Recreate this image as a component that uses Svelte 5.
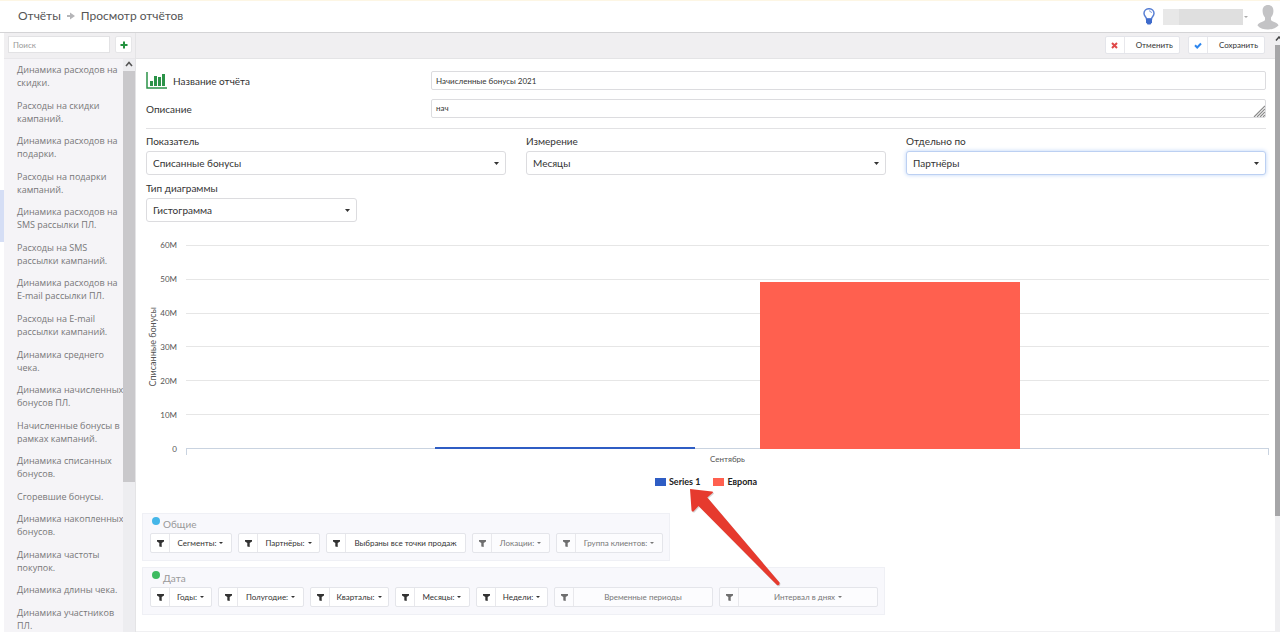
<script>
  const reports = [
    'Динамика расходов на скидки.',
    'Расходы на скидки кампаний.',
    'Динамика расходов на подарки.',
    'Расходы на подарки кампаний.',
    'Динамика расходов на SMS рассылки ПЛ.',
    'Расходы на SMS рассылки кампаний.',
    'Динамика расходов на E-mail рассылки ПЛ.',
    'Расходы на E-mail рассылки кампаний.',
    'Динамика среднего чека.',
    'Динамика начисленных бонусов ПЛ.',
    'Начисленные бонусы в рамках кампаний.',
    'Динамика списанных бонусов.',
    'Сгоревшие бонусы.',
    'Динамика накопленных бонусов.',
    'Динамика частоты покупок.',
    'Динамика длины чека.',
    'Динамика участников ПЛ.',
  ];

  const filterGroups = [
    {
      title: 'Общие',
      color: '#45b6e8',
      filters: [
        { label: 'Сегменты:', width: 82, caret: true },
        { label: 'Партнёры:', width: 82, caret: true },
        { label: 'Выбраны все точки продаж', width: 140 },
        { label: 'Локации:', width: 78, caret: true, muted: true },
        { label: 'Группа клиентов:', width: 107, caret: true, muted: true },
      ],
    },
    {
      title: 'Дата',
      color: '#3dbb61',
      filters: [
        { label: 'Годы:', width: 62, caret: true },
        { label: 'Полугодие:', width: 86, caret: true },
        { label: 'Кварталы:', width: 79, caret: true },
        { label: 'Месяцы:', width: 75, caret: true },
        { label: 'Недели:', width: 72, caret: true },
        { label: 'Временные периоды', width: 159, muted: true },
        { label: 'Интервал в днях', width: 159, caret: true, muted: true },
      ],
    },
  ];

  const ticks = ['60M', '50M', '40M', '30M', '20M', '10M', '0'];
  const maxValue = 60;
  const series = [
    { name: 'Series 1', value: 0.6, color: '#2f5dc4' },
    { name: 'Европа', value: 49, color: '#ff604f' },
  ];

  let search = '';
  let name = 'Начисленные бонусы 2021';
  let description = 'нач';
  let metric = 'Списанные бонусы';
  let dimension = 'Месяцы';
  let splitBy = 'Партнёры';
  let chartType = 'Гистограмма';
</script>

<div class="page">
  <header class="header">
    <nav class="breadcrumbs">
      <a href="#reports">Отчёты</a>
      <svg width="8" height="8" viewBox="0 0 8 8"><path d="M0 3h3V0.500L8 4 3 7.500V5H0z" fill="#b5b5b8" /></svg>
      <span>Просмотр отчётов</span>
    </nav>
    <div class="user">
      <svg class="bulb" width="12" height="17" viewBox="0 0 12 17">
        <path d="M3.500 11C3.500 9 1 8.200 1 5.300a5 4.600 0 0 1 10 0C11 8.200 8.500 9 8.500 11z" fill="#fff" stroke="#5a80d4" stroke-width="1.500" />
        <path d="M6 2.800q2.300.1 2.500 2.200" fill="none" stroke="#7e9be0" stroke-width="1" />
        <path d="M3 10.500h6v3.700L7.500 16.500h-3L3 14.200z" fill="#3f6bcb" />
      </svg>
      <span class="user-name"></span>
      <i class="caret"></i>
      <svg class="avatar" width="22" height="26" viewBox="0 0 22 26">
        <path d="M11 1c3.700 0 5.600 2.500 5.400 6.200-.1 3-1.200 4.600-2.400 6.300v2.600c1.200 2 6.500 2.200 7.500 5.400C18.500 24.500 15 25.500 11 25.500S3 24.500.5 21.500C1.500 18.300 6.800 18.100 8 16.100v-2.600C6.800 11.800 5.700 10.200 5.600 7.200 5.400 3.500 7.300 1 11 1z" fill="#c3c3c5" />
      </svg>
    </div>
  </header>

  <div class="body">
    <div class="rail"></div>

    <aside class="sidebar">
      <div class="search">
        <input type="text" placeholder="Поиск" aria-label="Поиск" bind:value={search} />
        <button type="button" class="add" aria-label="Добавить">
          <svg width="8" height="8" viewBox="0 0 8 8"><path d="M3 0.500h2V3h2.500v2H5v2.500H3V5H0.500V3H3z" fill="#23913f" /></svg>
        </button>
      </div>
      <div class="list-wrap">
        <ul class="reports">
          {#each reports as report}
            <li><a href="#report">{report}</a></li>
          {/each}
        </ul>
        <div class="scroll">
          <svg width="8" height="6" viewBox="0 0 8 6"><path d="M1 5l3-3.500L7 5" fill="none" stroke="#555" stroke-width="1.600" /></svg>
          <div class="thumb"></div>
        </div>
      </div>
    </aside>

    <main class="main">
      <div class="toolbar">
        <button type="button" class="split">
          <span class="icon"><svg width="7" height="7" viewBox="0 0 7 7"><path d="M1 1l5 5M6 1L1 6" stroke="#e04848" stroke-width="2" /></svg></span>
          <span class="text">Отменить</span>
        </button>
        <button type="button" class="split">
          <span class="icon"><svg width="8" height="7" viewBox="0 0 8 7"><path d="M1 3.300l2.200 2.200L7 1.500" fill="none" stroke="#2d86ee" stroke-width="2" /></svg></span>
          <span class="text">Сохранить</span>
        </button>
      </div>

      <div class="content">
        <div class="row">
          <label for="name">
            <svg width="21" height="17" viewBox="0 0 21 17">
              <path d="M1 0v16h20" fill="none" stroke="#2b9348" stroke-width="1.500" />
              <path d="M4 9h3v5H4zM8 4h3v10H8zM12 5h3v9h-3zM16 2h3v12h-3z" fill="#2b9348" />
            </svg>
            Название отчёта
          </label>
          <input id="name" type="text" bind:value={name} />
        </div>
        <div class="row">
          <label for="description">Описание</label>
          <div class="area">
            <textarea id="description" rows="1" bind:value={description}></textarea>
            <svg width="12" height="12" viewBox="0 0 12 12"><path d="M1 12L12 1M4 12l8-8M7 12l5-5M10 12l2-2" stroke="#8a8a8a" stroke-width="1.200" /></svg>
          </div>
        </div>

        <div class="params">
          <div class="field">
            <label for="metric">Показатель</label>
            <select id="metric" bind:value={metric}><option>Списанные бонусы</option></select>
          </div>
          <div class="field">
            <label for="dimension">Измерение</label>
            <select id="dimension" bind:value={dimension}><option>Месяцы</option></select>
          </div>
          <div class="field">
            <label for="split">Отдельно по</label>
            <select id="split" class="active" bind:value={splitBy}><option>Партнёры</option></select>
          </div>
          <div class="field narrow">
            <label for="type">Тип диаграммы</label>
            <select id="type" bind:value={chartType}><option>Гистограмма</option></select>
          </div>
        </div>

        <div class="chart">
          <div class="axis-title">Списанные бонусы</div>
          <div class="ticks">
            {#each ticks as tick}
              <span>{tick}</span>
            {/each}
          </div>
          <div class="plot">
            <div class="grid">
              {#each ticks.slice(1) as tick}
                <div></div>
              {/each}
            </div>
            <div class="bars">
              {#each series as item}
                <div class="bar" style="height: {(item.value / maxValue) * 100}%; background: {item.color}"></div>
              {/each}
            </div>
          </div>
          <div class="category">Сентябрь</div>
        </div>

        <div class="legend">
          {#each series as item, i}
            <span class="legend-item">
              <i style="background: {item.color}"></i>{item.name}
              {#if i === 0}
                <svg class="arrow" width="94" height="100" viewBox="0 0 94 100">
                  <path d="M1 1L23 3.500Q25 4 23 5.500L18.300 9.500 90.500 94.500Q90.500 98 87.500 97L9.500 18 4.500 23.500Q2.500 24 2 22z" fill="#aaa" opacity="0.500" />
                  <path d="M0 0L22 2.500Q24 3 22 4.500L17.300 8.500 89.500 93.500Q90 97 87 96L8.500 17 3.500 22.500Q1.500 23 1.500 21z" fill="#e63a2e" />
                </svg>
              {/if}
            </span>
          {/each}
        </div>

        {#each filterGroups as group}
          <section class="group">
            <h3><i style="background: {group.color}"></i>{group.title}</h3>
            <div class="filters">
              {#each group.filters as filter}
                <button type="button" class="split" class:muted={filter.muted} style="width: {filter.width}px">
                  <span class="icon"><svg width="7" height="7" viewBox="0 0 7 7"><path d="M0 0h7v1.500L4.700 3V7L2.300 6.500V3L0 1.500z" fill="#333" /></svg></span>
                  <span class="text">{filter.label}{#if filter.caret}<i class="caret"></i>{/if}</span>
                </button>
              {/each}
            </div>
          </section>
        {/each}
      </div>
    </main>

    <div class="page-scroll">
      <svg width="5" height="5" viewBox="0 0 5 5"><path d="M1 4.500L4 1l3 3.500" fill="none" stroke="#444" stroke-width="1.500" /></svg>
      <div class="thumb"></div>
    </div>
  </div>
</div>

<style>
  .page {
    display: flex;
    flex-direction: column;
    height: 100vh;
    overflow: hidden;
    background: #fff;
    color: #333;
    font-family: Lato, 'Open Sans', sans-serif;
    font-size: 10px;
  }

  .page * {
    box-sizing: border-box;
  }

  svg {
    display: block;
    flex: none;
  }

  a {
    color: inherit;
    text-decoration: none;
  }

  button,
  input,
  select,
  textarea {
    margin: 0;
    font-family: inherit;
    color: inherit;
  }

  .header {
    display: flex;
    flex: none;
    align-items: center;
    justify-content: space-between;
    height: 33px;
    padding: 0 1px 0 18px;
    border-top: 1px solid #fdf6e4;
    border-bottom: 1px solid #d4d4d6;
  }

  .breadcrumbs {
    display: flex;
    align-items: center;
    gap: 6px;
    padding-bottom: 2px;
    font-size: 12px;
    color: #555;
  }

  .user {
    display: flex;
    align-items: center;
  }

  .user-name {
    width: 80px;
    height: 16px;
    margin-left: 8px;
    background: linear-gradient(90deg, #e8e8e8 16px, #dfdfdf 16px);
  }

  .user .caret {
    margin-right: 9px;
    margin-left: 1px;
    color: #aaa;
  }

  .caret {
    display: inline-block;
    border: 2px solid transparent;
    border-top-color: currentColor;
    border-bottom: 0;
  }

  .body {
    display: flex;
    flex: 1;
    min-height: 0;
  }

  .rail {
    width: 4px;
    background: linear-gradient(#fff 157px, #d5def5 157px, #d5def5 209px, #fff 209px);
  }

  .sidebar {
    display: flex;
    flex-direction: column;
    width: 132px;
    border-right: 1px solid #e4e4e6;
    background: #f5f4f7;
  }

  .search {
    display: flex;
    gap: 5px;
    height: 26px;
    padding: 3px 3px 5px 4px;
    border-bottom: 1px solid #e8e7ea;
    background: #f0eff1;
  }

  .search input {
    flex: 1;
    min-width: 0;
    padding: 0 4px;
    border: 1px solid #e2e2e4;
    font-size: 8px;
  }

  .search input::placeholder {
    color: #999;
  }

  .add {
    display: flex;
    align-items: center;
    justify-content: center;
    width: 17px;
    padding: 0;
    border: 1px solid #e6e6e8;
    border-radius: 2px;
    background: #fff;
  }

  .list-wrap {
    display: flex;
    flex: 1;
    min-height: 0;
    overflow: hidden;
  }

  .reports {
    display: flex;
    flex: 1;
    flex-direction: column;
    gap: 9px;
    justify-content: space-between;
    min-width: 0;
    margin: 0;
    padding: 4px 0 0 13px;
    list-style: none;
    font-family: 'Open Sans', sans-serif;
    font-size: 9px;
    line-height: 13px;
    color: #777;
  }

  .reports li {
    margin-right: -3px;
  }

  .scroll {
    display: flex;
    flex: none;
    flex-direction: column;
    align-items: center;
    gap: 4px;
    width: 12px;
    padding-top: 2px;
    background: #ededf0;
  }

  .scroll .thumb {
    width: 100%;
    height: 72%;
    background: #c9c8cb;
  }

  .main {
    flex: 1;
    min-width: 0;
    border-bottom: 1px solid #f0f0f2;
  }

  .toolbar {
    display: flex;
    gap: 8px;
    justify-content: flex-end;
    height: 26px;
    padding: 3px 10px 4px 0;
    border-bottom: 1px solid #e4e4e6;
    background: #f0eff1;
  }

  .split {
    display: flex;
    align-items: stretch;
    padding: 0;
    border: 1px solid #e4e5ea;
    border-radius: 2px;
    background: #fff;
    font-size: 8px;
  }

  .split .icon {
    display: flex;
    flex: none;
    align-items: center;
    justify-content: center;
    width: 19px;
    border-right: 1px solid #e8e8ec;
  }

  .split .text {
    display: flex;
    flex: 1;
    align-items: center;
    justify-content: center;
    gap: 3px;
    white-space: nowrap;
  }

  .toolbar .split .text {
    padding: 0 6px 0 11px;
  }

  .content {
    padding: 12px 9px 0 10px;
  }

  .row {
    display: flex;
    height: 19px;
    margin-bottom: 9px;
  }

  .row label {
    display: flex;
    align-items: center;
    gap: 6px;
    width: 285px;
  }

  .row input,
  .row textarea {
    flex: 1;
    min-width: 0;
    height: 19px;
    padding: 0 4px;
    border: 1px solid #dcdcdf;
    border-radius: 2px;
    background: #fff;
    font-size: 8px;
    line-height: 16px;
    resize: none;
    overflow: hidden;
  }

  .area {
    display: flex;
    flex: 1;
    position: relative;
  }

  .area svg {
    position: absolute;
    right: 1px;
    bottom: 1px;
  }

  .params {
    display: grid;
    grid-template-columns: repeat(3, 1fr);
    gap: 0 20px;
    margin-top: 10px;
    padding-top: 3px;
    border-top: 1px solid #e2e2e4;
  }

  .field {
    display: flex;
    flex-direction: column;
    height: 47px;
  }

  .field label {
    height: 19px;
    line-height: 18px;
  }

  .field.narrow {
    width: 211px;
  }

  select {
    appearance: none;
    height: 24px;
    padding: 0 6px;
    border: 1px solid #dcdcdf;
    border-radius: 3px;
    background: #fff url("data:image/svg+xml,%3Csvg xmlns='http://www.w3.org/2000/svg' width='5' height='3'%3E%3Cpath d='M0 0h5L2.500 3z' fill='%23333'/%3E%3C/svg%3E") no-repeat right 6px center;
    font-size: 10px;
  }

  select.active {
    border-color: #bcd0f2;
    box-shadow: 0 0 4px #bcd3f8;
  }

  .chart {
    display: grid;
    grid-template-columns: 12px 19px 1fr;
    margin-top: 2px;
    margin-right: -3px;
    font-size: 8px;
    color: #555;
  }

  .axis-title {
    align-self: center;
    justify-self: center;
    writing-mode: vertical-rl;
    transform: rotate(180deg);
    font-size: 9px;
  }

  .ticks {
    display: flex;
    flex-direction: column;
    text-align: right;
    line-height: 34px;
  }

  .plot {
    display: grid;
    margin: 17px 0 17px 9px;
  }

  .grid,
  .bars {
    grid-area: 1 / 1;
  }

  .grid {
    display: grid;
    grid-auto-rows: 1fr;
    border-bottom: 1px solid #c9d3e0;
  }

  .grid div {
    border-top: 1px solid #e6e6e6;
  }

  .bars {
    display: flex;
    gap: 6%;
    align-items: flex-end;
    justify-content: center;
  }

  .bar {
    width: 24%;
  }

  .category {
    grid-column: 3;
    height: 20px;
    margin: -17px 0 0 9px;
    background:
      linear-gradient(#c9d3e0, #c9d3e0) no-repeat left top / 1px 6px,
      linear-gradient(#c9d3e0, #c9d3e0) no-repeat right top / 1px 6px;
    text-align: center;
    line-height: 20px;
  }

  .legend {
    display: flex;
    gap: 13px;
    justify-content: center;
    height: 12px;
    margin: 7px 0 25px;
    font-size: 9px;
    font-weight: bold;
    line-height: 12px;
    color: #222;
  }

  .legend-item {
    display: flex;
    align-items: center;
    gap: 3px;
    position: relative;
  }

  .legend-item i {
    width: 11px;
    height: 8px;
  }

  .arrow {
    position: absolute;
    top: 13px;
    left: 35px;
    z-index: 2;
  }

  .group {
    width: fit-content;
    height: 48px;
    margin: 0 0 6px -4px;
    padding: 3px 6px 0 7px;
    border: 1px solid #eff0f5;
    background: #f8f8fc;
  }

  .group h3 {
    display: flex;
    gap: 3px;
    height: 16px;
    margin: 0;
    padding-left: 2px;
    font-size: 10px;
    font-weight: normal;
    line-height: 14px;
    color: #999;
  }

  .group h3 i {
    width: 8px;
    height: 8px;
    border-radius: 50%;
  }

  .filters {
    display: flex;
    gap: 6px;
  }

  .filters .split {
    height: 20px;
  }

  .muted {
    background: #fcfcfe;
    color: #777;
  }

  .muted svg {
    opacity: 0.7;
  }

  .page-scroll {
    display: flex;
    flex-direction: column;
    gap: 4px;
    width: 5px;
    padding-top: 3px;
    background: #efeff1;
  }

  .page-scroll .thumb {
    height: 79%;
    background: #a6a6a8;
  }
</style>
